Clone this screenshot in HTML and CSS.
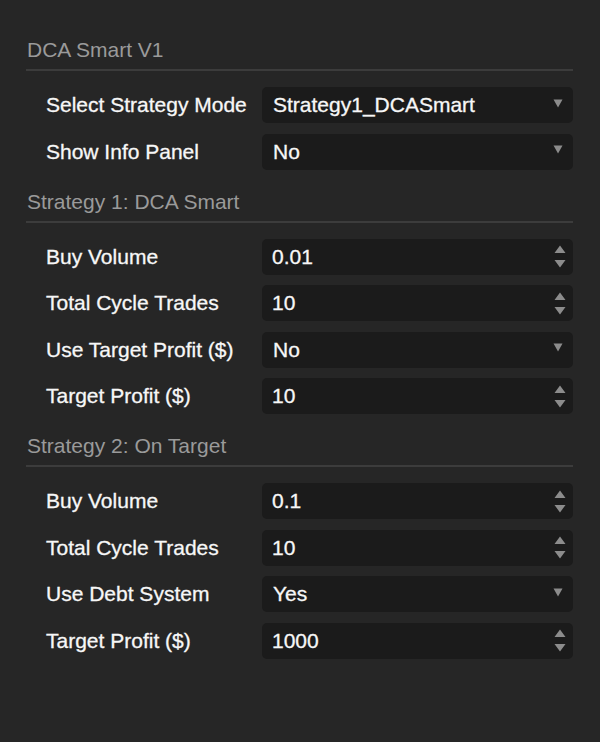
FILE: index.html
```html
<!DOCTYPE html>
<html lang="en">
<head>
<meta charset="utf-8">
<title>DCA Smart V1</title>
<link rel="stylesheet" href="styles.css">
</head>
<body>
<div class="panel">
  <section class="group">
    <h2 class="group-title">DCA Smart V1</h2>
    <div class="rows">
      <div class="row">
        <span class="label">Select Strategy Mode</span>
        <div class="field select"><span class="value">Strategy1_DCASmart</span><svg class="caret" width="10" height="9" viewBox="0 0 10 9"><path d="M0.5 0.5 H9.5 L5 8.5 Z" fill="#8c8c8c"/></svg></div>
      </div>
      <div class="row">
        <span class="label">Show Info Panel</span>
        <div class="field select"><span class="value">No</span><svg class="caret" width="10" height="9" viewBox="0 0 10 9"><path d="M0.5 0.5 H9.5 L5 8.5 Z" fill="#8c8c8c"/></svg></div>
      </div>
    </div>
  </section>

  <section class="group">
    <h2 class="group-title">Strategy 1: DCA Smart</h2>
    <div class="rows">
      <div class="row">
        <span class="label">Buy Volume</span>
        <div class="field number"><span class="value">0.01</span><svg class="spin" width="12" height="23" viewBox="0 0 12 23"><path d="M0.5 8 L6 0.5 L11.5 8 Z M0.5 15 H11.5 L6 22.5 Z" fill="#8c8c8c"/></svg></div>
      </div>
      <div class="row">
        <span class="label">Total Cycle Trades</span>
        <div class="field number"><span class="value">10</span><svg class="spin" width="12" height="23" viewBox="0 0 12 23"><path d="M0.5 8 L6 0.5 L11.5 8 Z M0.5 15 H11.5 L6 22.5 Z" fill="#8c8c8c"/></svg></div>
      </div>
      <div class="row">
        <span class="label">Use Target Profit ($)</span>
        <div class="field select"><span class="value">No</span><svg class="caret" width="10" height="9" viewBox="0 0 10 9"><path d="M0.5 0.5 H9.5 L5 8.5 Z" fill="#8c8c8c"/></svg></div>
      </div>
      <div class="row">
        <span class="label">Target Profit ($)</span>
        <div class="field number"><span class="value">10</span><svg class="spin" width="12" height="23" viewBox="0 0 12 23"><path d="M0.5 8 L6 0.5 L11.5 8 Z M0.5 15 H11.5 L6 22.5 Z" fill="#8c8c8c"/></svg></div>
      </div>
    </div>
  </section>

  <section class="group">
    <h2 class="group-title">Strategy 2: On Target</h2>
    <div class="rows">
      <div class="row">
        <span class="label">Buy Volume</span>
        <div class="field number"><span class="value">0.1</span><svg class="spin" width="12" height="23" viewBox="0 0 12 23"><path d="M0.5 8 L6 0.5 L11.5 8 Z M0.5 15 H11.5 L6 22.5 Z" fill="#8c8c8c"/></svg></div>
      </div>
      <div class="row">
        <span class="label">Total Cycle Trades</span>
        <div class="field number"><span class="value">10</span><svg class="spin" width="12" height="23" viewBox="0 0 12 23"><path d="M0.5 8 L6 0.5 L11.5 8 Z M0.5 15 H11.5 L6 22.5 Z" fill="#8c8c8c"/></svg></div>
      </div>
      <div class="row">
        <span class="label">Use Debt System</span>
        <div class="field select"><span class="value">Yes</span><svg class="caret" width="10" height="9" viewBox="0 0 10 9"><path d="M0.5 0.5 H9.5 L5 8.5 Z" fill="#8c8c8c"/></svg></div>
      </div>
      <div class="row">
        <span class="label">Target Profit ($)</span>
        <div class="field number"><span class="value">1000</span><svg class="spin" width="12" height="23" viewBox="0 0 12 23"><path d="M0.5 8 L6 0.5 L11.5 8 Z M0.5 15 H11.5 L6 22.5 Z" fill="#8c8c8c"/></svg></div>
      </div>
    </div>
  </section>
</div>
</body>
</html>
```

FILE: styles.css
```css
html, body {
  margin: 0;
  padding: 0;
  background: #262626;
}

body {
  font-family: "Liberation Sans", Arial, sans-serif;
  font-size: 21px;
  color: #f7f7f7;
  width: 600px;
  height: 742px;
  overflow: hidden;
}

.panel {
  padding: 38px 27px 0 26px;
  display: flex;
  flex-direction: column;
  gap: 20px;
}

.group-title {
  margin: 0 0 16px 0;
  padding: 0 0 7px 1px;
  font-size: 21px;
  font-weight: normal;
  line-height: 24px;
  color: #9a9a9a;
  border-bottom: 2px solid #3c3c3c;
}

.rows {
  display: flex;
  flex-direction: column;
  gap: 10.5px;
}

.row {
  display: grid;
  grid-template-columns: 236px 1fr;
  align-items: center;
  height: 36px;
}

.label {
  padding-left: 20px;
  line-height: 24px;
  color: #f7f7f7;
  white-space: nowrap;
  -webkit-text-stroke: 0.3px #f7f7f7;
}

.field {
  height: 36px;
  background: #1b1b1b;
  border-radius: 5px;
  display: flex;
  align-items: center;
  justify-content: space-between;
  padding: 0 10px 0 11px;
  box-sizing: border-box;
}

.field.number {
  padding-left: 10px;
  padding-right: 7px;
}

.value {
  line-height: 24px;
  color: #f7f7f7;
  -webkit-text-stroke: 0.3px #f7f7f7;
}

.caret {
  display: block;
  margin-top: -4px;
}

.spin {
  display: block;
}
```
